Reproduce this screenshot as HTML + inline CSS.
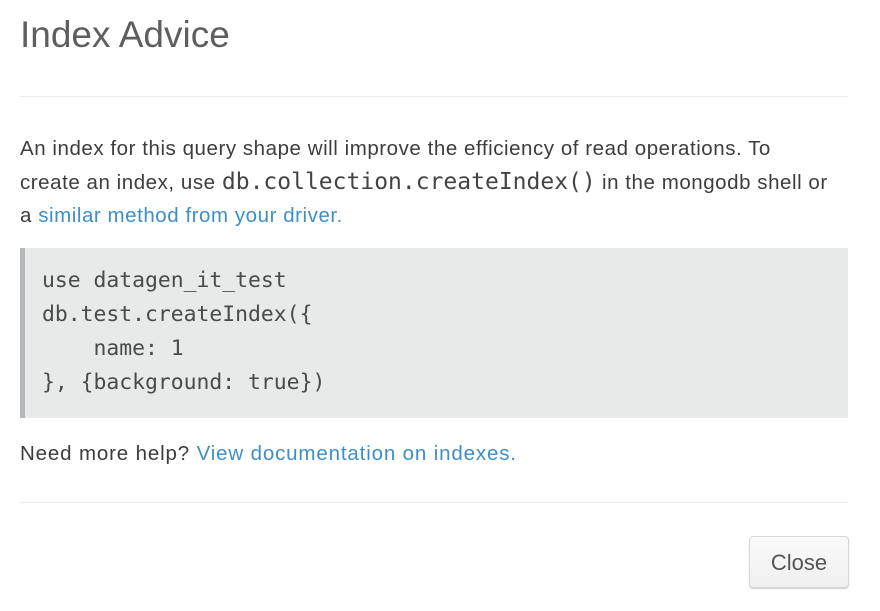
<!DOCTYPE html>
<html><head><style>
body{margin:0;width:880px;height:611px;background:#fff;font-family:"Liberation Sans",sans-serif;color:#3d3d3d;position:relative;overflow:hidden}
h1{position:absolute;left:20px;top:13px;margin:0;font-weight:normal;font-size:37px;color:#5e5e5e;line-height:44px}
.hr{position:absolute;left:20px;width:828px;height:1px;background:#eaeaea}
p{position:absolute;left:20px;margin:0;font-size:20.5px;letter-spacing:0.55px;line-height:33.5px;width:850px;white-space:nowrap}
a{color:#3e8fc9;text-decoration:none}
code{font-family:"DejaVu Sans Mono","Liberation Mono",monospace;font-size:23px;letter-spacing:0;color:#444}
.pre{position:absolute;left:20px;top:248px;width:823px;height:170px;background:#e8e9e9;border-left:5px solid #b5b9bc}
.pre div{position:absolute;left:17px;top:16px;font-family:"DejaVu Sans Mono","Liberation Mono",monospace;font-size:21.4px;line-height:34px;color:#4a4a4a;white-space:pre}
.btn{position:absolute;left:749px;top:536px;width:98px;height:50px;border:1px solid #d6d6d6;border-radius:4px;background:linear-gradient(#fafafa,#efefef);box-shadow:0 1px 1px #ccc;font-size:22px;color:#555;text-align:center;line-height:52px}
</style></head><body>
<h1>Index Advice</h1>
<div class="hr" style="top:96px"></div>
<p style="top:132px">An index for this query shape will improve the efficiency of read operations. To<br>create an index, use <code>db.collection.createIndex()</code> in the mongodb shell or<br>a <a>similar method from your driver.</a></p>
<div class="pre"><div>use datagen_it_test
db.test.createIndex({
    name: 1
}, {background: true})</div></div>
<p style="top:437px;letter-spacing:0.85px">Need more help? <a>View documentation on indexes.</a></p>
<div class="hr" style="top:502px"></div>
<div class="btn">Close</div>
</body></html>
